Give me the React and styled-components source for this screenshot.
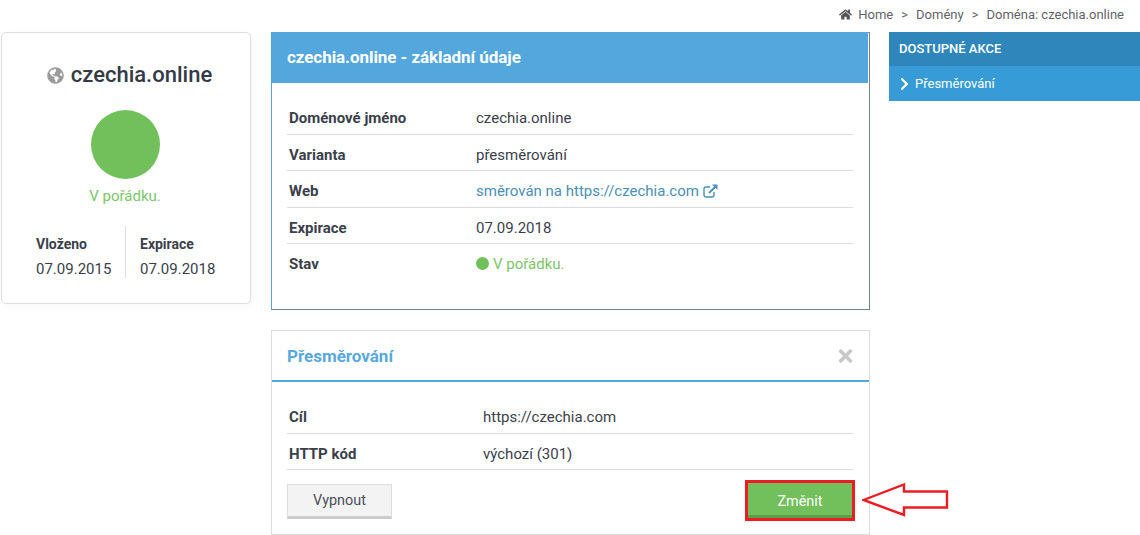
import React from 'react';
import styled, { createGlobalStyle } from 'styled-components';
import { FaHome, FaGlobeAmericas, FaChevronRight, FaTimes } from 'react-icons/fa';

const GlobalStyle = createGlobalStyle`
  html, body {
    margin: 0;
    padding: 0;
    background: #ffffff;
  }
  body {
    font-family: Roboto, "Liberation Sans", sans-serif;
    font-size: 15px;
    color: #3a3f4b;
  }
  * {
    box-sizing: border-box;
  }
`;

const Page = styled.div`
  width: 1140px;
  height: 535px;
  overflow: hidden;
`;

const Breadcrumb = styled.nav`
  height: 32px;
  padding: 6px 16px 0 0;
  display: flex;
  justify-content: flex-end;
  align-items: flex-start;
  font-size: 13px;
  line-height: 17px;
  color: #5f6368;
`;

const HomeIcon = styled(FaHome)`
  width: 13px;
  height: 13px;
  margin: 2px 6px 0 0;
  color: #555555;
`;

const Crumb = styled.span`
  white-space: nowrap;
`;

const CrumbSep = styled.span`
  margin: 0 8px;
`;

const Columns = styled.div`
  display: grid;
  grid-template-columns: 250px 599px 251px;
  column-gap: 20px;
  padding-left: 1px;
  align-items: start;
`;

const SummaryCard = styled.section`
  height: 272px;
  border: 1px solid #dedede;
  border-radius: 5px;
  box-shadow: 2px 2px 8px rgba(0, 0, 0, 0.04);
  padding-top: 28px;
  display: flex;
  flex-direction: column;
  align-items: center;
`;

const SummaryTitle = styled.h1`
  margin: 0;
  padding-left: 7px;
  font-size: 22px;
  font-weight: 500;
  line-height: 28px;
  color: #333a45;
  display: flex;
  align-items: center;
  gap: 7px;
`;

const GlobeIcon = styled(FaGlobeAmericas)`
  width: 17px;
  height: 17px;
  color: #9b9b9b;
`;

const StatusCircle = styled.div`
  width: 69px;
  height: 69px;
  margin: 21px 2px 0 0;
  border-radius: 50%;
  background: #72c05c;
`;

const StatusText = styled.div`
  margin: 7px 2px 0 0;
  font-size: 15px;
  line-height: 20px;
  color: #7cc568;
`;

const DatesRow = styled.div`
  margin-top: 20px;
  width: 100%;
  display: grid;
  grid-template-columns: 123px 1fr;
`;

const DateCell = styled.div`
  height: 52px;
  padding: 6px 0 0 ${props => (props.$divided ? '14px' : '34px')};
  border-left: ${props => (props.$divided ? '1px solid #dedede' : 'none')};
  font-size: 15px;
  line-height: 25px;
`;

const DateLabel = styled.div`
  font-size: 14px;
  font-weight: 700;
  color: #3a3f4b;
`;

const MainColumn = styled.div`
  display: flex;
  flex-direction: column;
  gap: 20px;
`;

const InfoPanel = styled.section`
  height: 278px;
  border: 1px solid #5aa6dc;
  border-right-color: #6d8497;
  border-bottom-color: #6d8497;
`;

const InfoHeader = styled.h2`
  margin: -1px 0 0 -1px;
  width: 597px;
  height: 51px;
  padding: 0 16px 2px;
  display: flex;
  align-items: center;
  background: #53a7dc;
  color: #ffffff;
  font-size: 17px;
  font-weight: 700;
  letter-spacing: -0.06px;
`;

const RowList = styled.div`
  padding: ${props => props.$top}px 16px 0 15px;
`;

const Row = styled.div`
  display: grid;
  grid-template-columns: ${props => props.$labelWidth}px 1fr;
  height: 36.5px;
  align-items: center;
  padding: ${props => (props.$last ? '3px' : '5px')} 0 0 2px;
  border-bottom: ${props => (props.$last ? 'none' : '1px solid #dddddd')};
`;

const RowLabel = styled.div`
  font-size: 15px;
  font-weight: 700;
  color: #3a3f4b;
`;

const RowValue = styled.div`
  font-size: 15px;
  color: #3a3f4b;
  display: flex;
  align-items: center;
`;

const WebLink = styled.a`
  color: #4a8fb8;
  text-decoration: none;
  display: inline-flex;
  align-items: center;
  gap: 4px;
`;

const StatusValue = styled.span`
  color: #7cc568;
  display: inline-flex;
  align-items: center;
  gap: 4px;
`;

const StatusDot = styled.span`
  width: 13px;
  height: 13px;
  border-radius: 50%;
  background: #72c05c;
`;

const RedirectPanel = styled.section`
  height: 205px;
  border: 1px solid #dddddd;
`;

const RedirectHeader = styled.div`
  height: 51px;
  padding: 0 16px 0 15px;
  display: flex;
  align-items: center;
  justify-content: space-between;
  border-bottom: 2px solid #53a7dc;
`;

const RedirectTitle = styled.h3`
  margin: 0;
  font-size: 17px;
  font-weight: 700;
  color: #5aa9de;
`;

const CloseIcon = styled(FaTimes)`
  width: 15px;
  height: 20px;
  color: #c8c8c8;
`;

const Actions = styled.div`
  padding: 10px 15px 0;
  display: flex;
  justify-content: space-between;
  align-items: center;
`;

const OffButton = styled.button`
  width: 105px;
  height: 35px;
  margin-top: 1px;
  padding-top: 2px;
  border: 1px solid #dddddd;
  border-bottom: 3px solid #cccccc;
  background: #f3f3f3;
  color: #4a4f5a;
  font-family: inherit;
  font-size: 14.4px;
`;

const ChangeWrap = styled.div`
  position: relative;
  margin-right: -1px;
`;

const ChangeButton = styled.button`
  display: block;
  width: 110px;
  height: 41px;
  padding-top: 3px;
  border: 3px solid #ed1c24;
  background: #72c05c;
  box-shadow: inset 0 -3px 0 #5a9e46;
  color: #ffffff;
  font-family: inherit;
  font-size: 14.4px;
`;

const ArrowMark = styled.svg`
  position: absolute;
  left: 117px;
  top: 3px;
  width: 87px;
  height: 37px;
`;

const SideMenu = styled.aside`
  margin-left: -1px;
`;

const SideHeader = styled.div`
  height: 34px;
  padding: 0 0 2px 10px;
  display: flex;
  align-items: center;
  background: #2f86bb;
  color: #ffffff;
  font-size: 13px;
  font-weight: 500;
`;

const SideItem = styled.div`
  height: 35px;
  padding-left: 11px;
  display: flex;
  align-items: center;
  gap: 6px;
  background: #369bd7;
  color: #ffffff;
  font-size: 13px;
`;

const SideChevron = styled(FaChevronRight)`
  width: 9px;
  height: 14px;
`;

const ExternalIcon = () => (
  <svg width="15" height="14" viewBox="0 0 15 14" fill="none" stroke="currentColor" strokeWidth="1.4">
    <path d="M11 8v3a2 2 0 0 1-2 2H3a2 2 0 0 1-2-2V5a2 2 0 0 1 2-2h4" />
    <path d="M6 9l7-7" strokeWidth="1.8" />
    <path d="M9 0.5h5.5V6z" fill="currentColor" stroke="none" />
  </svg>
);

const App = () => (
  <Page>
    <GlobalStyle />
    <Breadcrumb>
      <HomeIcon />
      <Crumb>Home</Crumb>
      <CrumbSep>&gt;</CrumbSep>
      <Crumb>Domény</Crumb>
      <CrumbSep>&gt;</CrumbSep>
      <Crumb>Doména: czechia.online</Crumb>
    </Breadcrumb>
    <Columns>
      <SummaryCard>
        <SummaryTitle>
          <GlobeIcon />
          czechia.online
        </SummaryTitle>
        <StatusCircle />
        <StatusText>V pořádku.</StatusText>
        <DatesRow>
          <DateCell>
            <DateLabel>Vloženo</DateLabel>
            07.09.2015
          </DateCell>
          <DateCell $divided>
            <DateLabel>Expirace</DateLabel>
            07.09.2018
          </DateCell>
        </DatesRow>
      </SummaryCard>

      <MainColumn>
        <InfoPanel>
          <InfoHeader>czechia.online - základní údaje</InfoHeader>
          <RowList $top={15}>
            <Row $labelWidth={187}>
              <RowLabel>Doménové jméno</RowLabel>
              <RowValue>czechia.online</RowValue>
            </Row>
            <Row $labelWidth={187}>
              <RowLabel>Varianta</RowLabel>
              <RowValue>přesměrování</RowValue>
            </Row>
            <Row $labelWidth={187}>
              <RowLabel>Web</RowLabel>
              <RowValue>
                <WebLink href="#">
                  směrován na https://czechia.com
                  <ExternalIcon />
                </WebLink>
              </RowValue>
            </Row>
            <Row $labelWidth={187}>
              <RowLabel>Expirace</RowLabel>
              <RowValue>07.09.2018</RowValue>
            </Row>
            <Row $labelWidth={187} $last>
              <RowLabel>Stav</RowLabel>
              <RowValue>
                <StatusValue>
                  <StatusDot />
                  V pořádku.
                </StatusValue>
              </RowValue>
            </Row>
          </RowList>
        </InfoPanel>

        <RedirectPanel>
          <RedirectHeader>
            <RedirectTitle>Přesměrování</RedirectTitle>
            <CloseIcon />
          </RedirectHeader>
          <RowList $top={15}>
            <Row $labelWidth={194}>
              <RowLabel>Cíl</RowLabel>
              <RowValue>https://czechia.com</RowValue>
            </Row>
            <Row $labelWidth={194}>
              <RowLabel as="div">HTTP kód</RowLabel>
              <RowValue>výchozí (301)</RowValue>
            </Row>
          </RowList>
          <Actions>
            <OffButton type="button">Vypnout</OffButton>
            <ChangeWrap>
              <ChangeButton type="button">Změnit</ChangeButton>
              <ArrowMark viewBox="0 0 87 37">
                <path
                  d="M1.5 17 L42 1.5 L42 8.5 L85 8.5 L85 24.5 L42 24.5 L42 32 Z"
                  fill="#ffffff"
                  stroke="#ed1c24"
                  strokeWidth="2.4"
                />
              </ArrowMark>
            </ChangeWrap>
          </Actions>
        </RedirectPanel>
      </MainColumn>

      <SideMenu>
        <SideHeader>DOSTUPNÉ AKCE</SideHeader>
        <SideItem>
          <SideChevron />
          Přesměrování
        </SideItem>
      </SideMenu>
    </Columns>
  </Page>
);

export default App;
